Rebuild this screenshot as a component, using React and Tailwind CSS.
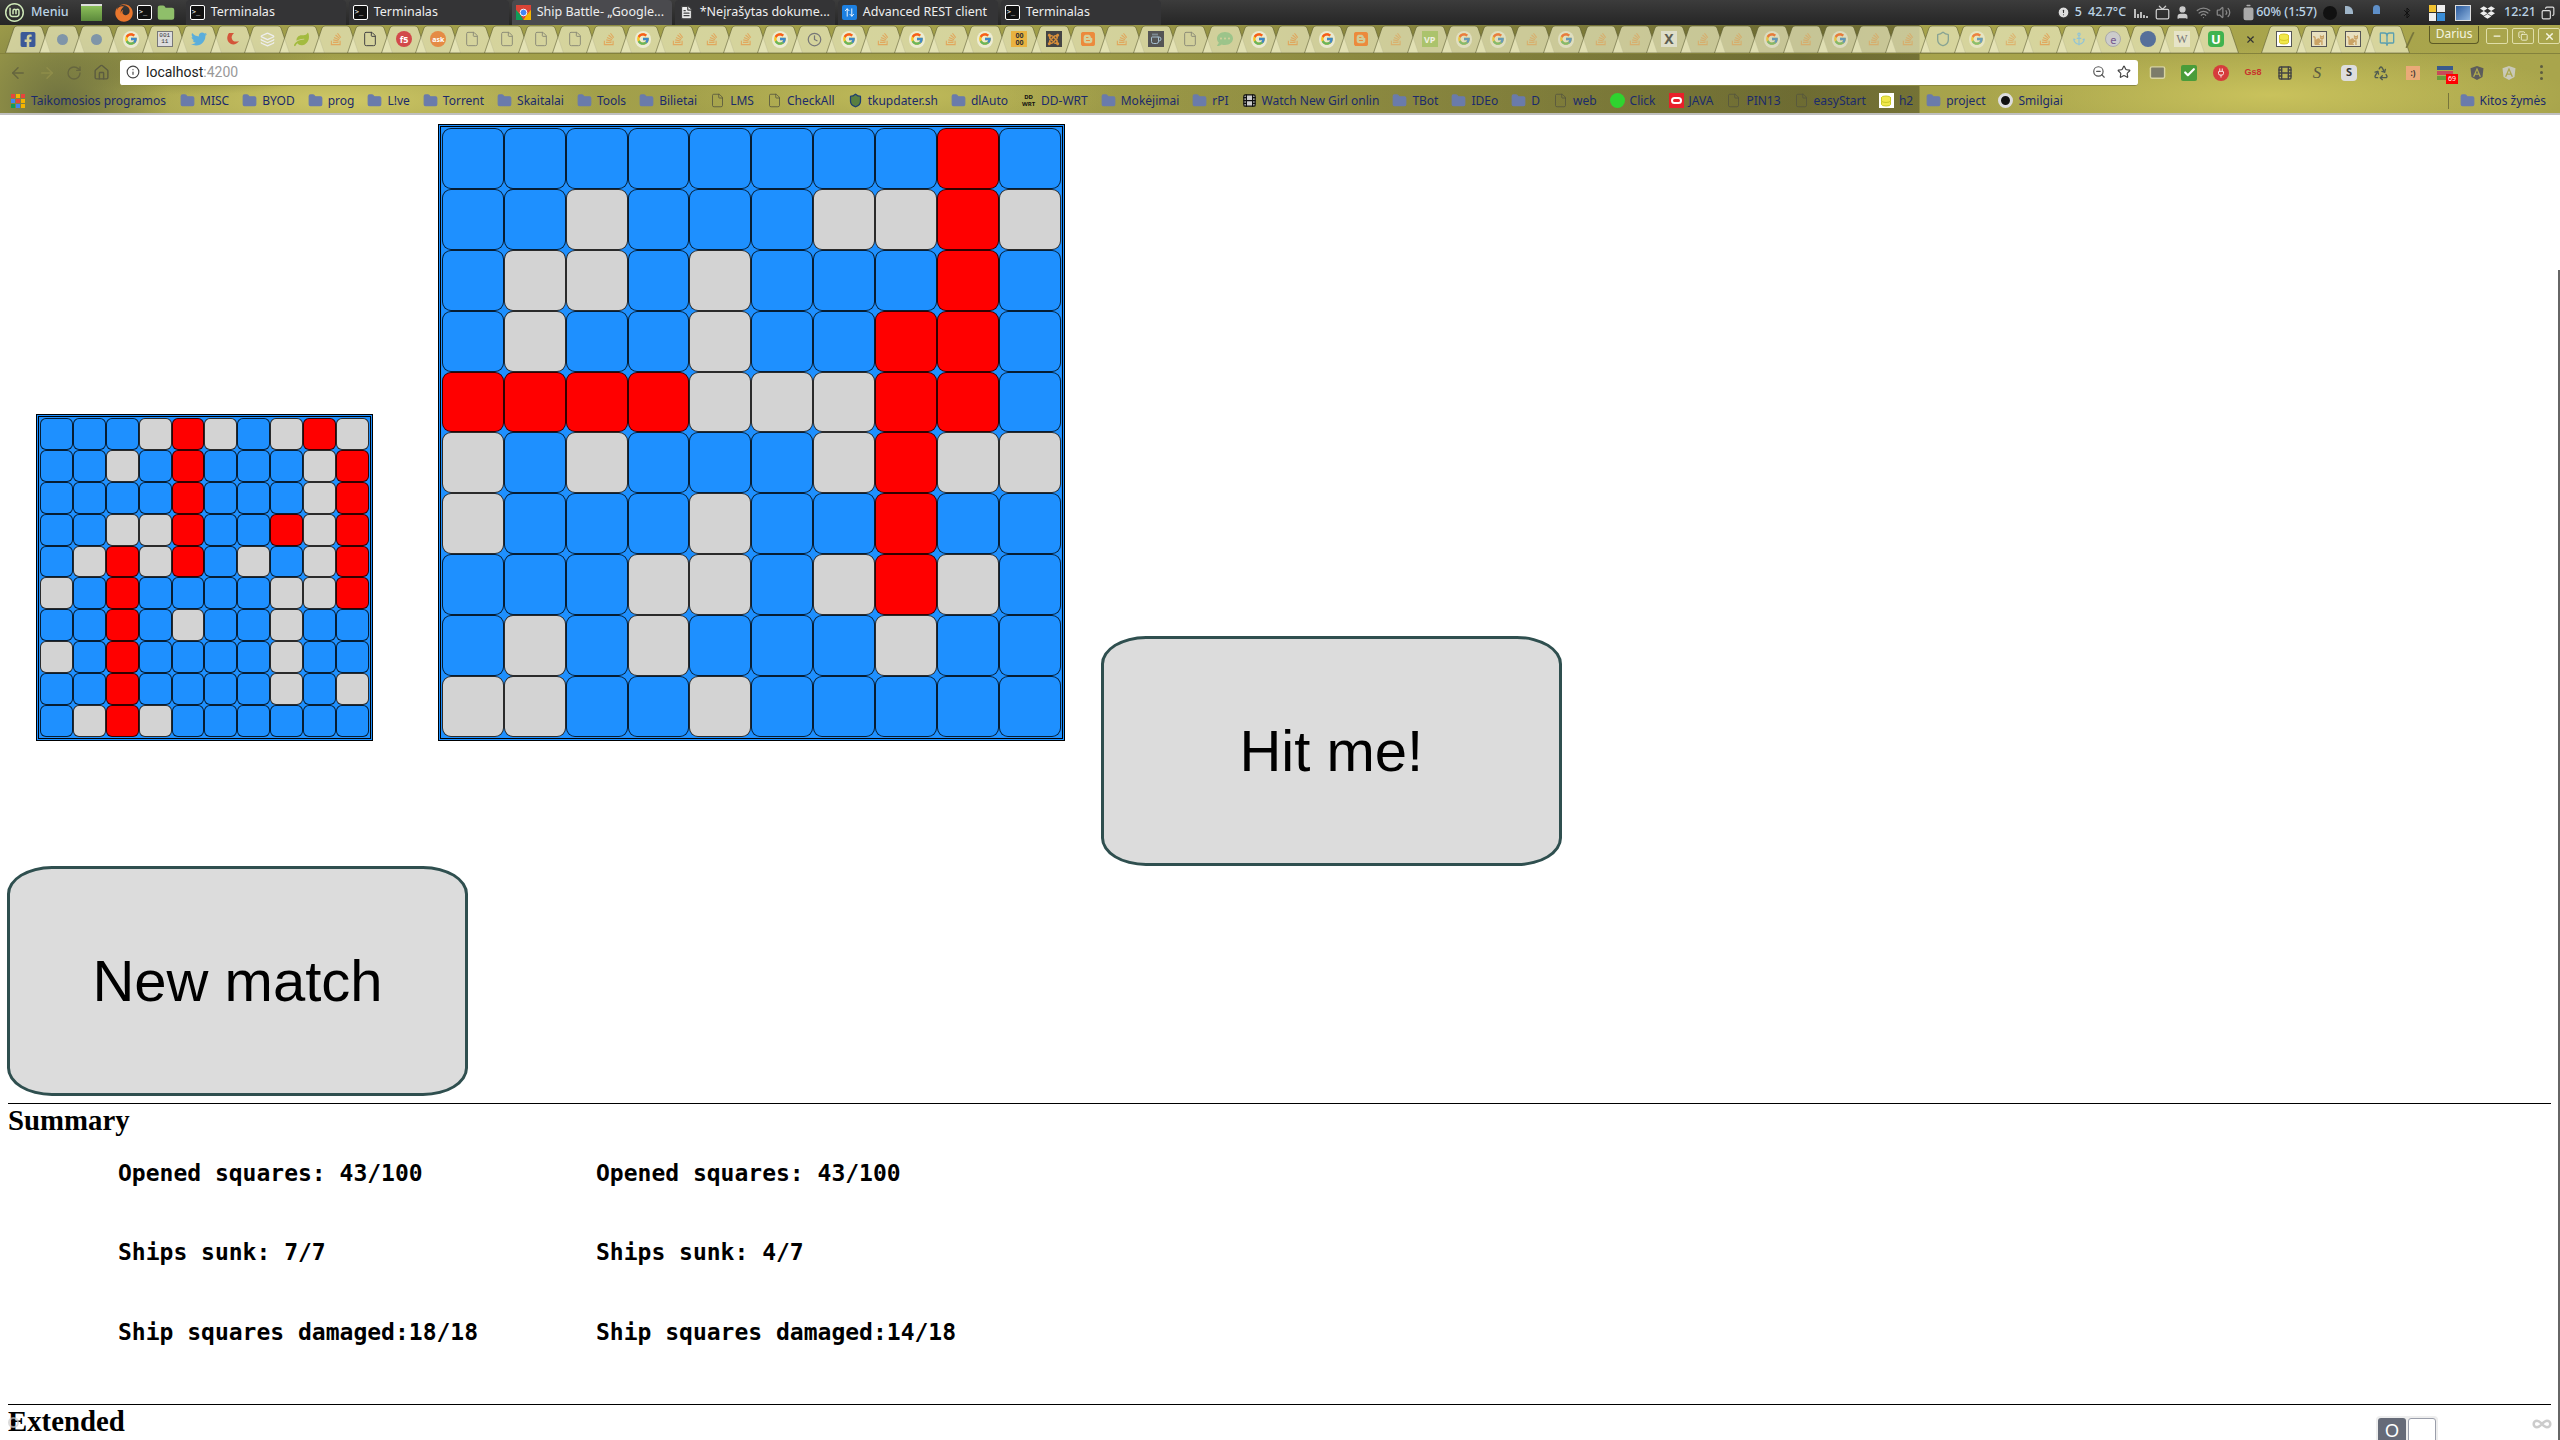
import { ArrowLeft, ArrowRight, RotateCw, Home, Info, ZoomOut, Star, File, FileText, Folder, Layers, Clock, Shield, Anchor, Coffee, Database, BookOpen, Mail, Check, Plug, Film, Recycle, User, Wifi, Volume2, Battery, Bluetooth, Minus, X, ArrowUpDown, CircleAlert, Infinity as InfinityIcon, Copy, Tv } from 'lucide-react';
import { FaFacebookSquare, FaTwitter, FaStackOverflow, FaLeaf, FaJoomla, FaBlogger, FaCommentDots, FaCat, FaFirefox, FaDropbox, FaAngular } from 'react-icons/fa';
import { FcGoogle } from 'react-icons/fc';
import { SiLinuxmint } from 'react-icons/si';

const smallBoard = [
  'BBBGRGBGRG',
  'BBGBRBBBGR',
  'BBBBRBBBGR',
  'BBGGRBBRGR',
  'BGRGRBGBGR',
  'GBRBBBBGGR',
  'BBRBGBBGBB',
  'GBRBBBBGBB',
  'BBRBBBBGBG',
  'BGRGBBBBBB',
];

const bigBoard = [
  'BBBBBBBBRB',
  'BBGBBBGGRG',
  'BGGBGBBBRB',
  'BGBBGBBRRB',
  'RRRRGGGRRB',
  'GBGBBBGRGG',
  'GBBBGBBRBB',
  'BBBGGBGRGB',
  'BGBGBBBGBB',
  'GGBBGBBBBB',
];

const cellColors = { B: 'bg-[#1e90ff]', G: 'bg-[#d3d3d3]', R: 'bg-[#ff0000]' };

function Board({ rows, big }) {
  return (
    <div className="grid grid-cols-10 border-[3px] border-double border-black bg-[#1e90ff] p-px">
      {rows.join('').split('').map((c, i) => (
        <div
          key={i}
          className={`border border-black/80 ${big ? 'w-[61.9px] h-[60.9px] rounded-[9px]' : 'w-[32.9px] h-[31.9px] rounded-[6px]'} ${cellColors[c]}`}
        />
      ))}
    </div>
  );
}

function BigButton({ children, className = '' }) {
  return (
    <button className={`w-[461px] h-[230px] shrink-0 bg-[#dcdcdc] border-[3px] border-[#2f4f4f] rounded-[45px/28px] text-[58px] text-black font-['Liberation_Sans',Arial,sans-serif] ${className}`}>
      {children}
    </button>
  );
}

const Tiny = ({ className, children }) => (
  <div className={`flex items-center justify-center w-4 h-4 leading-none ${className}`}>{children}</div>
);

const favicons = {
  fb: <FaFacebookSquare size={17} color="#3b5998" />,
  dot: <div className="w-[11px] h-[11px] rounded-full bg-[#7f95a8]" />,
  g: <div className="flex items-center justify-center w-[17px] h-[17px] rounded-full bg-white/70 opacity-80"><FcGoogle size={14} /></div>,
  bin: <Tiny className="border border-[#777] bg-[#ddd] text-[6px] text-[#333] font-['Liberation_Mono',monospace] break-all text-center">00111</Tiny>,
  tw: <FaTwitter size={16} color="#5aaedb" />,
  swirl: <svg width="16" height="16" viewBox="0 0 16 16"><path d="M4 2c-3 4-2 9 2 11 3 1 6 0 8-3-3 1-6 1-7-2-1-2 0-4 2-6z" fill="#d4553a" /></svg>,
  layers: <Layers size={15} color="#eeeeee" />,
  leaf: <FaLeaf size={15} color="#a3bb3f" />,
  so: <FaStackOverflow size={14} color="#e59a4a" className="opacity-75" />,
  docd: <File size={16} color="#444444" strokeWidth={1.5} />,
  doc: <File size={16} color="#8d8d78" strokeWidth={1.5} />,
  f5: <Tiny className="rounded-full bg-[#d2494a] text-[9px] text-white font-bold">f5</Tiny>,
  ask: <Tiny className="rounded-full bg-[#e58b45] text-[7px] text-white font-bold">ask</Tiny>,
  clock: <Clock size={15} color="#777777" />,
  eight: <Tiny className="bg-[#e9b23f] text-[7px] text-[#333] font-bold text-center">00 00</Tiny>,
  joomla: <Tiny className="bg-[#444]"><FaJoomla size={13} color="#d98f3a" /></Tiny>,
  blog: <FaBlogger size={16} color="#ec8a3c" />,
  mug: <Tiny className="bg-[#555]"><Coffee size={12} color="#a6c0d0" /></Tiny>,
  chat: <FaCommentDots size={16} color="#9cc48a" />,
  vp: <Tiny className="bg-[#9dc05a] text-[9px] text-white font-bold">VP</Tiny>,
  x: <Tiny className="bg-[#e8e8e0] text-[14px] text-[#333] font-bold">X</Tiny>,
  shield: <Shield size={16} color="#668f8f" />,
  anchor: <Anchor size={14} color="#8fc3d8" />,
  e: <Tiny className="border border-[#aaa] rounded-full bg-[#ccc] text-[11px] text-[#77588f]">e</Tiny>,
  gl: <div className="w-4 h-4 rounded-full bg-[#56709a]" />,
  w: <Tiny className="bg-[#e6e4c8] text-[12px] text-[#777] font-['Liberation_Serif',serif]">W</Tiny>,
  u: <Tiny className="rounded-[4px] bg-[#3fb34f] text-[13px] text-white font-bold">U</Tiny>,
  db: <Tiny className="border border-[#555] bg-white"><Database size={12} color="#d9c926" fill="#f1e84a" /></Tiny>,
  cat: <Tiny className="border border-[#555] bg-[#e8e0c0]"><FaCat size={11} color="#c9a264" /></Tiny>,
  book: <BookOpen size={16} color="#5a9fb0" />,
};

const leftTabs = 'fb dot dot g bin tw swirl layers leaf so docd f5 ask doc doc doc doc so g so so so g clock g so g so g eight joomla blog so mug doc chat g so g blog so vp g g so g so so x so so g so g so so shield g so so anchor e gl w u'.split(' ');
const rightTabs = ['db', 'cat', 'cat', 'book'];

function TabShape() {
  return (
    <svg className="absolute left-[-6px] top-0" width="46" height="28" viewBox="0 0 46 28">
      <path d="M0.5 28 L9 3 Q10 1 12 1 L34 1 Q36 1 37 3 L45.5 28 Z" fill="#e9e7bd" fillOpacity="0.72" stroke="#55552c" strokeOpacity="0.55" />
    </svg>
  );
}

function Tab({ icon, dim }) {
  return (
    <div className="relative w-[34.2px] h-[28px] shrink-0">
      <TabShape />
      <div className={`absolute left-[9px] top-[6px] w-[16px] h-[16px] flex items-center justify-center ${dim ? 'opacity-70' : ''}`}>{favicons[icon]}</div>
    </div>
  );
}

function TermIcon() {
  return (
    <div className="w-[15px] h-[15px] shrink-0 rounded-[2px] border border-white bg-[#111] text-[7px] leading-[13px] text-white pl-[1px] font-['DejaVu_Sans_Mono',monospace]">&gt;_</div>
  );
}

function ChromeIcon() {
  return (
    <svg width="15" height="15" viewBox="0 0 16 16" className="shrink-0">
      <rect width="16" height="16" fill="#db4437" />
      <path d="M0 16V5l5 6 3 5z" fill="#0f9d58" />
      <path d="M16 16H8l3-5 5-6z" fill="#f4b400" />
      <circle cx="8" cy="8" r="3.6" fill="#4285f4" stroke="#fff" />
    </svg>
  );
}

const windows = [
  { icon: <TermIcon />, label: 'Terminalas' },
  { icon: <TermIcon />, label: 'Terminalas' },
  { icon: <ChromeIcon />, label: 'Ship Battle- „Google...', active: true },
  { icon: <FileText size={15} color="#444444" fill="#eeeeee" className="shrink-0" />, label: '*Neįrašytas dokume...' },
  { icon: <div className="flex items-center justify-center w-[15px] h-[15px] shrink-0 bg-[#1c7fe0] rounded-[2px]"><ArrowUpDown size={11} color="#ffffff" /></div>, label: 'Advanced REST client' },
  { icon: <TermIcon />, label: 'Terminalas' },
];

function TopPanel() {
  return (
    <div className="flex items-center h-[25px] bg-gradient-to-b from-[#3c3c3c] to-[#262626] font-['Noto_Sans',sans-serif] text-[12.5px] text-[#eeeeee]">
      <SiLinuxmint size={19} color="#cfe8b8" className="ml-[5px]" />
      <span className="ml-[7px] font-medium text-[#bcd4e6]">Meniu</span>
      <div className="ml-[12px] w-[21px] h-[17px] border-t-2 border-[#ddd] bg-gradient-to-b from-[#8cbf5a] to-[#5c8a3c]" />
      <FaFirefox size={18} color="#e8762d" className="ml-[13px]" />
      <div className="ml-[4px]"><TermIcon /></div>
      <Folder size={18} color="#8fbf6a" fill="#8fbf6a" className="ml-[5px]" />
      <div className="flex gap-[3px] ml-[11px] self-end h-[25px]">
        {windows.map((w, i) => (
          <div key={i} className={`flex items-center gap-[6px] w-[160px] pl-[4px] rounded-t-[4px] overflow-hidden whitespace-nowrap ${w.active ? 'bg-[#4a4a4e]' : 'bg-[#343436]'}`}>
            {w.icon}
            <span>{w.label}</span>
          </div>
        ))}
      </div>
      <div className="flex items-center ml-auto">
        <CircleAlert size={13} color="#dddddd" fill="#dddddd" stroke="#333333" />
        <span className="ml-[5px] text-[#bcd4e6] font-medium">5</span>
        <span className="ml-[6px] text-[#bcd4e6] font-medium">42.7°C</span>
        <div className="flex items-end gap-px ml-[8px] h-[10px]">
          <i className="block w-[2px] h-[9px] bg-[#bbb]" />
          <i className="block w-[2px] h-[4px] bg-[#bbb]" />
          <i className="block w-[2px] h-[6px] bg-[#bbb]" />
          <i className="block w-[2px] h-[3px] bg-[#bbb]" />
          <i className="block w-[2px] h-[2px] bg-[#bbb]" />
        </div>
        <Tv size={15} color="#cccccc" className="ml-[7px]" />
        <User size={15} color="#cccccc" fill="#cccccc" className="ml-[5px]" />
        <Wifi size={15} color="#888888" className="ml-[6px]" />
        <Volume2 size={15} color="#888888" className="ml-[5px]" />
        <Battery size={17} color="#aaaaaa" fill="#aaaaaa" className="ml-[9px] -rotate-90" />
        <span className="ml-[-1px] text-[#bcd4e6] font-medium">60% (1:57)</span>
        <div className="ml-[6px] w-[14px] h-[14px] rounded-full bg-[#111]" />
        <div className="ml-[8px] w-[8px] h-[8px] mb-[6px] rounded-tr-[6px] bg-[#9fb5c8]" />
        <div className="ml-[20px] w-[7px] h-[9px] mb-[6px] rounded-t-[6px] bg-[#5e8fc8]" />
        <Bluetooth size={12} color="#111111" className="ml-[21px]" />
        <div className="grid grid-cols-2 gap-px ml-[16px] w-[16px] h-[16px]">
          <i className="bg-[#f2c230]" />
          <i className="bg-[#eeeeee]" />
          <i className="bg-[#eeeeee]" />
          <i className="bg-[#3a8ed8]" />
        </div>
        <div className="ml-[10px] w-[16px] h-[16px] border border-[#ddd] bg-gradient-to-br from-[#2b5a9c] to-[#8fb5e0]" />
        <FaDropbox size={15} color="#eeeeee" className="ml-[9px]" />
        <span className="ml-[9px] text-[#bcd4e6] font-medium">12:21</span>
        <Copy size={14} color="#dddddd" className="ml-[5px] mr-[5px] -scale-x-100" />
      </div>
    </div>
  );
}

function TabStrip() {
  return (
    <div className="flex h-[29px] pl-[11px] border-b border-[#84823c]">
      {leftTabs.map((t, i) => <Tab key={i} icon={t} dim={i >= 40 && i < 59} />)}
      <div className="relative w-[34.2px] h-[28px] shrink-0 flex items-center justify-center">
        <X size={11} color="#333333" strokeWidth={2.5} />
      </div>
      {rightTabs.map((t, i) => <Tab key={i} icon={t} />)}
      <div className="ml-[5px] mt-[7px] w-[30px] h-[16px] -skew-x-[25deg] rounded-[2px] bg-[#dcdaa8]/90 border border-[#77753a]" />
      <div className="flex ml-[18px] items-start font-['Noto_Sans',sans-serif]">
        <div className="w-[50px] h-[18px] mt-[1px] rounded-b-[4px] border border-t-0 border-[#5c5a25] text-[12px] leading-[15px] text-center text-[#f5f5e0]">Darius</div>
        <div className="flex items-center justify-center ml-[7px] mt-[3px] w-[22px] h-[16px] border border-[#e0dea8] rounded-[2px]"><Minus size={10} color="#f5f5e0" strokeWidth={3} /></div>
        <div className="flex items-center justify-center ml-[4px] mt-[3px] w-[22px] h-[16px] border border-[#e0dea8] rounded-[2px]"><Copy size={10} color="#f5f5e0" /></div>
        <div className="flex items-center justify-center ml-[4px] mt-[3px] w-[22px] h-[16px] border border-[#e0dea8] rounded-[2px]"><X size={11} color="#f5f5e0" strokeWidth={3} /></div>
      </div>
    </div>
  );
}

function ExtIcon({ children }) {
  return <div className="flex items-center justify-center w-[32px] h-[18px]">{children}</div>;
}

function Toolbar() {
  return (
    <div className="flex items-center h-[34px] pl-[9px] pt-[3px]">
      <ArrowLeft size={18} color="#66663f" />
      <ArrowRight size={18} color="#8f8d4a" className="ml-[11px]" />
      <RotateCw size={16} color="#66663f" className="ml-[10px]" />
      <Home size={17} color="#5c5c40" className="ml-[11px]" />
      <div className="flex items-center ml-[10px] w-[2018px] h-[26px] bg-white rounded-[3px] border-b border-[#8a8840] font-['Roboto',sans-serif] text-[14px]">
        <Info size={14} color="#444444" className="ml-[6px]" />
        <span className="ml-[6px] text-[#222]">localhost</span>
        <span className="text-[#999]">:4200</span>
        <ZoomOut size={14} color="#555555" className="ml-auto" />
        <Star size={14} color="#444444" className="ml-[11px] mr-[7px]" />
      </div>
      <div className="flex ml-[3px] items-center">
        <ExtIcon><Mail size={17} color="#d8d4a0" fill="#7c7c6a" /></ExtIcon>
        <ExtIcon><div className="flex items-center justify-center w-[16px] h-[16px] rounded-[2px] bg-[#4a9c3a]"><Check size={13} color="#ffffff" strokeWidth={4} /></div></ExtIcon>
        <ExtIcon><div className="flex items-center justify-center w-[16px] h-[16px] rounded-full bg-[#d63c3c]"><Plug size={10} color="#ffffff" /></div></ExtIcon>
        <ExtIcon><span className="text-[9px] font-bold text-[#c9302c] font-['Liberation_Sans',sans-serif]">Gs8</span></ExtIcon>
        <ExtIcon><Film size={16} color="#444444" /></ExtIcon>
        <ExtIcon><span className="text-[17px] italic text-[#5c5c40] font-['Liberation_Serif',serif]">S</span></ExtIcon>
        <ExtIcon><div className="flex items-center justify-center w-[16px] h-[16px] rounded-[4px] bg-[#ddd] text-[11px] font-bold text-[#333]">S</div></ExtIcon>
        <ExtIcon><Recycle size={16} color="#4f5a50" /></ExtIcon>
        <ExtIcon><div className="flex items-center justify-center w-[14px] h-[14px] bg-[#eaaa78] text-[8px] font-bold text-[#333]">:)</div></ExtIcon>
        <ExtIcon>
          <div className="relative flex flex-col gap-px w-[16px]">
            <i className="block h-[4px] bg-[#3a5a8c]" />
            <i className="block h-[4px] bg-[#c84a5a]" />
            <i className="block h-[4px] bg-[#6a9c3a]" />
            <span className="absolute left-[9px] top-[8px] w-[12px] h-[10px] bg-[#ff0000] text-[7px] leading-[10px] text-center text-white">69</span>
          </div>
        </ExtIcon>
        <ExtIcon><FaAngular size={16} color="#5c5c5c" /></ExtIcon>
        <ExtIcon><FaAngular size={16} color="#c9c9b8" /></ExtIcon>
        <ExtIcon>
          <div className="flex flex-col gap-[3px]">
            <i className="block w-[3px] h-[3px] rounded-full bg-[#5c5c40]" />
            <i className="block w-[3px] h-[3px] rounded-full bg-[#5c5c40]" />
            <i className="block w-[3px] h-[3px] rounded-full bg-[#5c5c40]" />
          </div>
        </ExtIcon>
      </div>
    </div>
  );
}

const FolderIcon = () => <Folder size={15} color="#6a7bab" fill="#6a7bab" className="shrink-0" />;
const DocIcon = () => <File size={15} color="#55553f" strokeWidth={1.3} className="shrink-0" />;

const bookmarks = [
  { label: 'MISC', icon: <FolderIcon /> },
  { label: 'BYOD', icon: <FolderIcon /> },
  { label: 'prog', icon: <FolderIcon /> },
  { label: 'L!ve', icon: <FolderIcon /> },
  { label: 'Torrent', icon: <FolderIcon /> },
  { label: 'Skaitalai', icon: <FolderIcon /> },
  { label: 'Tools', icon: <FolderIcon /> },
  { label: 'Bilietai', icon: <FolderIcon /> },
  { label: 'LMS', icon: <DocIcon /> },
  { label: 'CheckAll', icon: <DocIcon /> },
  { label: 'tkupdater.sh', icon: <Shield size={15} color="#1f3f6f" fill="#5a7f3f" className="shrink-0" /> },
  { label: 'dlAuto', icon: <FolderIcon /> },
  { label: 'DD-WRT', icon: <span className="shrink-0 w-[15px] whitespace-normal text-[6px] leading-[7px] font-bold text-[#111] text-center">DD WRT</span> },
  { label: 'Mokėjimai', icon: <FolderIcon /> },
  { label: 'rPI', icon: <FolderIcon /> },
  { label: 'Watch New Girl onlin', icon: <Film size={15} color="#111111" fill="#cccccc" className="shrink-0" /> },
  { label: 'TBot', icon: <FolderIcon /> },
  { label: 'IDEo', icon: <FolderIcon /> },
  { label: 'D', icon: <FolderIcon /> },
  { label: 'web', icon: <DocIcon /> },
  { label: 'Click', icon: <div className="shrink-0 w-[15px] h-[15px] rounded-full bg-[#2fd32f]" /> },
  { label: 'JAVA', icon: <div className="flex items-center justify-center shrink-0 w-[15px] h-[15px] bg-[#e8202a]"><i className="block w-[11px] h-[7px] rounded-full border-2 border-white" /></div> },
  { label: 'PIN13', icon: <DocIcon /> },
  { label: 'easyStart', icon: <DocIcon /> },
  { label: 'h2', icon: <div className="flex items-center justify-center shrink-0 w-[15px] h-[15px] bg-white"><Database size={12} color="#c9c926" fill="#f1e84a" /></div> },
  { label: 'project', icon: <FolderIcon /> },
  { label: 'Smilgiai', icon: <div className="shrink-0 w-[15px] h-[15px] rounded-full border-[3px] border-[#ddd] bg-[#111]" /> },
];

function AppsIcon() {
  const colors = ['bg-[#e8453c]', 'bg-[#f4b400]', 'bg-[#e8453c]', 'bg-[#4285f4]', 'bg-[#e8453c]', 'bg-[#f4b400]', 'bg-[#0f9d58]', 'bg-[#4285f4]', 'bg-[#f4b400]'];
  return (
    <div className="grid grid-cols-3 gap-px w-[14px] h-[14px] shrink-0">
      {colors.map((c, i) => <i key={i} className={`block ${c}`} />)}
    </div>
  );
}

function BookmarkBar() {
  return (
    <div className="flex items-center h-[27px] pl-[11px] font-['Noto_Sans',sans-serif] text-[12px] text-[#1b2a6b] whitespace-nowrap border-b-2 border-[#bfbfbf]">
      <AppsIcon />
      <span className="ml-[6px]">Taikomosios programos</span>
      <div className="flex items-center gap-[13px] ml-[14px]">
        {bookmarks.map(b => (
          <div key={b.label} className="flex items-center gap-[5px]">
            {b.icon}
            <span>{b.label}</span>
          </div>
        ))}
      </div>
      <div className="flex items-center ml-auto pr-[14px]">
        <div className="w-px h-[16px] bg-[#77753a] mr-[11px]" />
        <div className="flex items-center gap-[5px]"><FolderIcon /><span>Kitos žymės</span></div>
      </div>
    </div>
  );
}

function BrowserChrome() {
  return (
    <div>
      <TopPanel />
      <div className="bg-[linear-gradient(90deg,transparent_1000px,rgba(40,40,20,0.45)_1800px,rgba(40,40,20,0.4)_1919px,transparent_1920px),radial-gradient(circle_at_60px_80px,#6f7240_0px,transparent_110px),radial-gradient(ellipse_150px_30px_at_190px_40px,#85843e_0px,transparent_100%),radial-gradient(ellipse_260px_45px_at_340px_75px,#cfc866_0px,transparent_100%),radial-gradient(ellipse_220px_40px_at_900px_70px,#c0bb5a_0px,transparent_100%),radial-gradient(ellipse_300px_50px_at_2270px_70px,#c9c25c_0px,transparent_100%),linear-gradient(90deg,#a09e4a,#a9a54c)]">
        <TabStrip />
        <Toolbar />
        <BookmarkBar />
      </div>
    </div>
  );
}

function Stats({ label, left, right }) {
  return (
    <>
      <div>{label}{left}</div>
      <div>{label}{right}</div>
    </>
  );
}

export default function App() {
  return (
    <div className="relative w-[2560px] h-[1440px] overflow-hidden bg-white">
      <BrowserChrome />

      {/* Game boards + hit button */}
      <div className="flex items-end pl-[36px] pt-[9px]">
        <div className="flex items-end gap-[65px] mb-[125px]">
          <Board rows={smallBoard} />
          <Board rows={bigBoard} big />
        </div>
        <BigButton className="ml-[36px]">Hit me!</BigButton>
      </div>

      <BigButton className="ml-[7px] block">New match</BigButton>

      <div className="mx-[8px] mt-[7px] w-[2543px] h-px bg-black" />
      <h2 className="ml-[8px] h-[33px] text-[28.8px] leading-[33px] font-bold text-black font-['Liberation_Serif',serif]">Summary</h2>

      <div className="grid grid-cols-[478px_auto] gap-y-[52.5px] mt-[23px] pl-[118px] text-[23px] leading-[27px] font-bold text-black font-['DejaVu_Sans_Mono',monospace]">
        <Stats label="Opened squares: " left="43/100" right="43/100" />
        <Stats label="Ships sunk: " left="7/7" right="4/7" />
        <Stats label="Ship squares damaged:" left="18/18" right="14/18" />
      </div>

      <div className="mx-[8px] mt-[58px] w-[2543px] h-px bg-black" />
      <h2 className="ml-[8px] h-[33px] text-[28.8px] leading-[33px] font-bold text-black font-['Liberation_Serif',serif]">Extended</h2>

      {/* overlays: scrollbar + extension widgets */}
      <div className="absolute right-0 top-[270px] bottom-0 w-[2px] bg-[#666666]" />
      <div className="absolute left-[8px] top-[1417px] w-[11px] h-[11px] rounded-full border-2 border-[#cccccc]/70" />
      <div className="absolute left-[2376px] top-[1416px] flex gap-[2px] p-[2px] rounded-[4px] bg-[#eeeeee]">
        <div className="w-[28px] h-[30px] rounded-[3px] bg-[#666b78] text-[18px] leading-[26px] text-center text-white font-['Liberation_Sans',sans-serif]">O</div>
        <div className="w-[28px] h-[30px] rounded-[3px] border border-[#9a9eaa] bg-white" />
      </div>
      <InfinityIcon size={20} color="#cccccc" strokeWidth={3} className="absolute left-[2532px] top-[1414px]" />
    </div>
  );
}
